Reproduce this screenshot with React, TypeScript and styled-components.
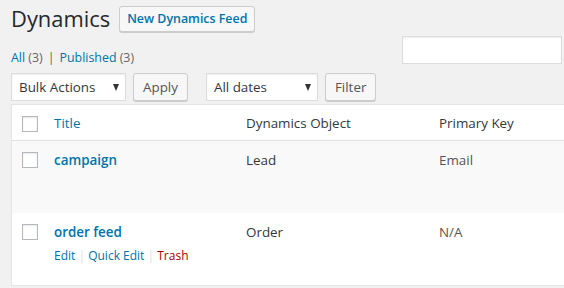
import styled, { createGlobalStyle } from "styled-components";

const GlobalStyle = createGlobalStyle`
  html, body {
    margin: 0;
    padding: 0;
    background: #f1f1f1;
    overflow: hidden;
  }
  body {
    font-family: "Open Sans", "Noto Sans", sans-serif;
    font-size: 12.4px;
    color: #444;
  }
`;

const Wrap = styled.div`
  padding: 0 2px 0 11px;
`;

const Header = styled.div`
  display: flex;
  align-items: center;
  gap: 9px;
  height: 37px;
`;

const Heading = styled.h1`
  margin: 0;
  font-size: 21.9px;
  font-weight: 400;
  color: #23282d;
  line-height: 30px;
`;

const Button = styled.button<{ primaryText?: boolean }>`
  height: 26px;
  padding: 0 7px;
  font-family: inherit;
  font-size: 12.4px;
  font-weight: ${(p) => (p.primaryText ? 600 : 400)};
  color: ${(p) => (p.primaryText ? "#0073aa" : "#555")};
  background: #f7f7f7;
  border: 1px solid #ccc;
  border-radius: 3px;
  box-shadow: 0 1px 0 #ccc;
  cursor: pointer;
`;

const FilterRow = styled.div`
  display: flex;
  justify-content: space-between;
  align-items: flex-start;
  margin-top: -1px;
`;

const Views = styled.div`
  margin-top: 12px;
  color: #666;
  font-size: 12.4px;
  line-height: 20px;
  a {
    color: #0073aa;
    text-decoration: none;
  }
`;

const Sep = styled.span`
  margin: 0 5px;
  color: #666;
`;

const SearchInput = styled.input`
  width: 160px;
  height: 28px;
  box-sizing: border-box;
  border: 1px solid #ddd;
  background: #fff;
  box-shadow: inset 0 1px 2px rgba(0, 0, 0, 0.07);
  outline: none;
`;

const TableNav = styled.div`
  display: flex;
  align-items: center;
  margin-top: 5px;
  height: 28px;
`;

const Select = styled.div<{ w: number }>`
  box-sizing: border-box;
  width: ${(p) => p.w}px;
  height: 28px;
  display: flex;
  align-items: center;
  justify-content: space-between;
  padding: 0 6px 0 7px;
  background: #fff;
  border: 1px solid #ddd;
  box-shadow: inset 0 1px 2px rgba(0, 0, 0, 0.07);
  color: #32373c;
  font-size: 13.4px;
`;

const Caret = styled.span`
  width: 0;
  height: 0;
  border-left: 3.5px solid transparent;
  border-right: 3.5px solid transparent;
  border-top: 7px solid #333;
`;

const ActionGroup = styled.div`
  display: flex;
  align-items: center;
  gap: 7px;
  margin-right: 18px;
  button {
    height: 28px;
    padding: 0 9px;
    font-size: 13.4px;
  }
`;

const Table = styled.div`
  width: 620px;
  margin-top: 3px;
  background: #fff;
  border: 1px solid #e5e5e5;
  box-shadow: 0 1px 1px rgba(0, 0, 0, 0.04);
`;

const Row = styled.div<{ alt?: boolean; head?: boolean }>`
  display: grid;
  grid-template-columns: 32px 192px 193px 1fr;
  height: ${(p) => (p.head ? 35 : 72)}px;
  background: ${(p) => (p.alt ? "#f9f9f9" : "#fff")};
  border-bottom: ${(p) => (p.head ? "1px solid #e1e1e1" : "none")};
`;

const Cell = styled.div<{ strong?: boolean }>`
  padding: 10px 10px 0;
  font-size: 13.4px;
  line-height: 1.45;
  color: ${(p) => (p.strong ? "#32373c" : "#555")};
`;

const HeadCell = styled.div<{ link?: boolean }>`
  padding: 9px 10px 0;
  font-size: 13.4px;
  line-height: 1.4;
  color: ${(p) => (p.link ? "#0073aa" : "#32373c")};
`;

const CheckCell = styled.div`
  padding: 11px 0 0 10px;
`;

const Checkbox = styled.span`
  display: block;
  box-sizing: border-box;
  width: 16px;
  height: 16px;
  border: 1px solid #b4b9be;
  background: #fff;
  box-shadow: inset 0 1px 2px rgba(0, 0, 0, 0.1);
`;

const RowTitle = styled.a`
  color: #0073aa;
  font-weight: 600;
  font-size: 13.4px;
  text-decoration: none;
`;

const RowActions = styled.div`
  margin-top: 5px;
  font-size: 12px;
  color: #ddd;
`;

const ActionLink = styled.a<{ danger?: boolean }>`
  color: ${(p) => (p.danger ? "#a00" : "#0073aa")};
  text-decoration: none;
`;

const feeds = [
  { title: "campaign", object: "Lead", key: "Email", actions: false },
  { title: "order feed", object: "Order", key: "N/A", actions: true },
];

export default function App() {
  return (
    <>
      <GlobalStyle />
      <Wrap>
        <Header>
          <Heading>Dynamics</Heading>
          <Button primaryText>New Dynamics Feed</Button>
        </Header>
        <FilterRow>
          <Views>
            <a href="#">All</a> (3)<Sep>|</Sep>
            <a href="#">Published</a> (3)
          </Views>
          <SearchInput />
        </FilterRow>
        <TableNav>
          <ActionGroup>
            <Select w={115}>
              Bulk Actions <Caret />
            </Select>
            <Button>Apply</Button>
          </ActionGroup>
          <ActionGroup>
            <Select w={112}>
              All dates <Caret />
            </Select>
            <Button>Filter</Button>
          </ActionGroup>
        </TableNav>
        <Table>
          <Row head>
            <CheckCell>
              <Checkbox />
            </CheckCell>
            <HeadCell link>Title</HeadCell>
            <HeadCell>Dynamics Object</HeadCell>
            <HeadCell>Primary Key</HeadCell>
          </Row>
          {feeds.map((f, i) => (
            <Row key={f.title} alt={i % 2 === 0}>
              <CheckCell>
                <Checkbox />
              </CheckCell>
              <Cell>
                <RowTitle href="#">{f.title}</RowTitle>
                {f.actions && (
                  <RowActions>
                    <ActionLink href="#">Edit</ActionLink> |{" "}
                    <ActionLink href="#">Quick Edit</ActionLink> |{" "}
                    <ActionLink href="#" danger>
                      Trash
                    </ActionLink>
                  </RowActions>
                )}
              </Cell>
              <Cell strong>{f.object}</Cell>
              <Cell>{f.key}</Cell>
            </Row>
          ))}
        </Table>
      </Wrap>
    </>
  );
}
